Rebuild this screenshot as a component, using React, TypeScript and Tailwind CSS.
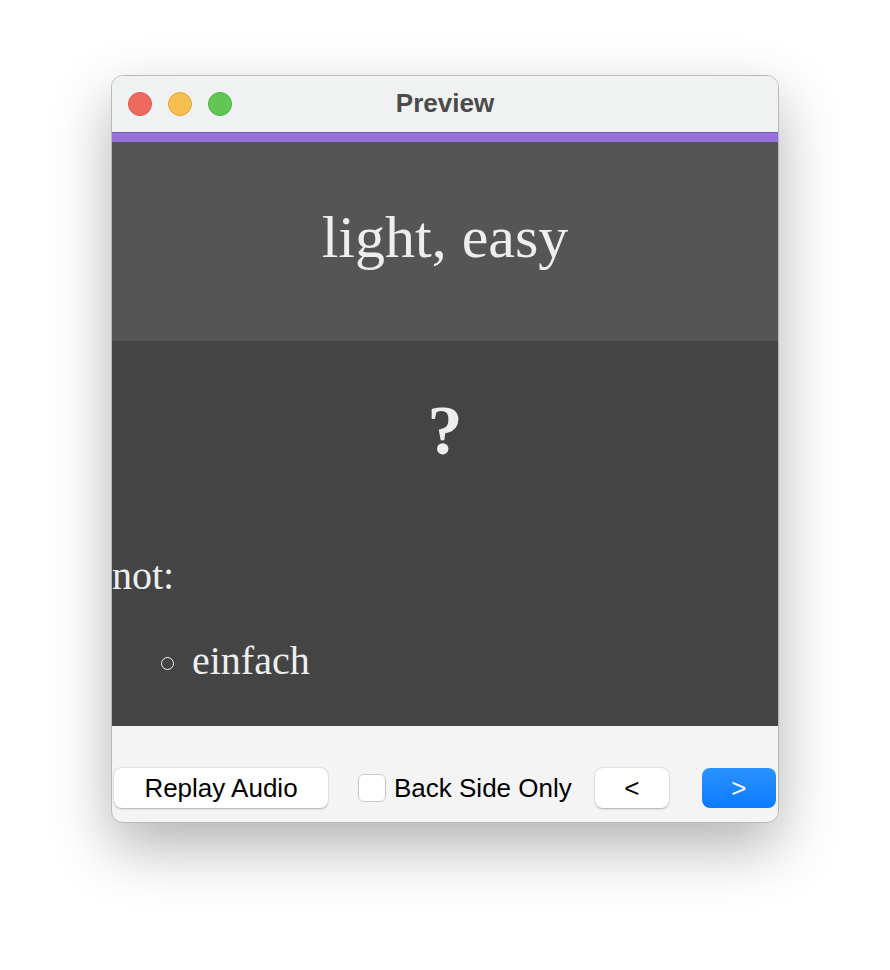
import React from "react";

const sans = "font-['Liberation_Sans',Arial,sans-serif]";
const serif = "font-['Liberation_Serif','Times_New_Roman',serif]";

const TrafficLights: React.FC = () => (
  <div className="flex items-center gap-4">
    <span className="w-6 h-6 rounded-full bg-[#ee6a5e] border border-[#d8574c]" />
    <span className="w-6 h-6 rounded-full bg-[#f6be4f] border border-[#dea53a]" />
    <span className="w-6 h-6 rounded-full bg-[#62c654] border border-[#4fae43]" />
  </div>
);

export default function App() {
  return (
    <div className="min-h-screen bg-white pt-[75px] pl-[111px]">
      <div className="w-[668px] h-[748px] rounded-[12px] overflow-hidden border border-[#b9b9b9] bg-[#f4f4f4] shadow-[0_24px_60px_rgba(0,0,0,0.3)] flex flex-col">
        {/* Title bar */}
        <div className="relative h-[56px] bg-[#f0f1f1] flex items-center pl-[16px] shrink-0">
          <TrafficLights />
          <div className={`absolute inset-0 pb-[2px] flex items-center justify-center text-[26px] font-bold text-[#4a4a4a] ${sans}`}>
            Preview
          </div>
        </div>

        {/* Card */}
        <div className="h-[10px] bg-[#9571d9] border-t border-[#7a59c4] shrink-0" />
        <div className={`h-[199px] bg-[#555555] pt-[65px] text-center text-[60px] leading-none text-[#eeeeee] shrink-0 ${serif}`}>
          light, easy
        </div>
        <div className={`h-[385px] bg-[#444444] text-[#eeeeee] shrink-0 overflow-hidden ${serif}`}>
          <div className="pt-[55px] text-center text-[70px] font-bold leading-none">?</div>
          <div className="mt-[90px] text-[40px] leading-none">not:</div>
          <div className="mt-[45px] pl-[49px] flex items-center gap-[18px] text-[40px] leading-none">
            <span className="w-[13px] h-[13px] rounded-full border border-[#eeeeee] mt-[4px]" />
            <span>einfach</span>
          </div>
        </div>

        {/* Controls */}
        <div className={`flex-1 flex items-end pb-[14px] px-[2px] text-[26px] text-black ${sans}`}>
          <button className="w-[214px] h-[40px] rounded-[8px] bg-white shadow-[0_0.5px_2px_rgba(0,0,0,0.3)] flex items-center justify-center">
            Replay Audio
          </button>
          <label className="ml-[30px] h-[40px] flex items-center">
            <span className="w-[28px] h-[28px] rounded-[6px] bg-white border border-[#c9c9c9]" />
            <span className="ml-[8px]">Back Side Only</span>
          </label>
          <button className="ml-[23px] w-[74px] h-[40px] rounded-[8px] bg-white shadow-[0_0.5px_2px_rgba(0,0,0,0.3)] flex items-center justify-center">
            &lt;
          </button>
          <button className="ml-[33px] w-[74px] h-[40px] rounded-[8px] bg-gradient-to-b from-[#2a92ff] to-[#0a7aff] text-white flex items-center justify-center">
            &gt;
          </button>
        </div>
      </div>
    </div>
  );
}
